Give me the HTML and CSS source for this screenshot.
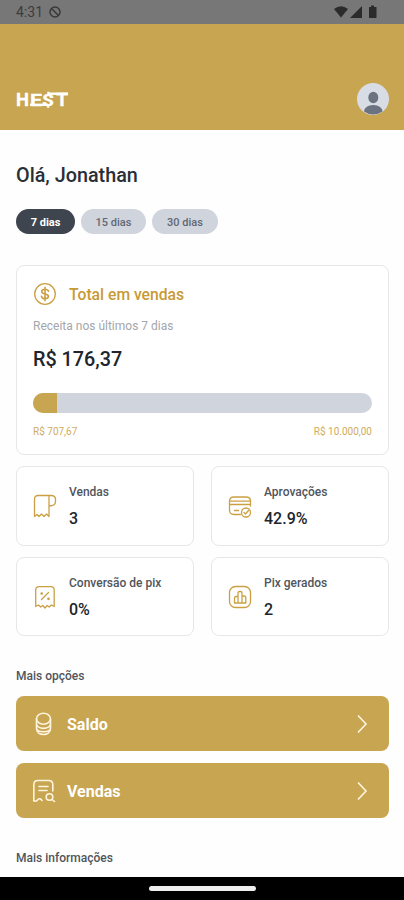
FILE: index.html
```html
<!DOCTYPE html>
<html lang="pt-BR">
<head>
<meta charset="utf-8">
<title>Hest</title>
<link rel="stylesheet" href="styles.css">
</head>
<body>
<div class="status">
  <span class="time">4:31</span>
  <svg class="dnd" width="12" height="12" viewBox="0 0 12 12" fill="none" stroke="#393939" stroke-width="1.5"><circle cx="6" cy="6" r="5"/><path d="M2.500 2.500l7 7"/></svg>
  <svg class="signals" width="44" height="14" viewBox="0 0 44 14" fill="#2b2b2b"><path d="M0 4Q7-1.500 14 4L7 12.500z"/><path d="M28 1v12H16z"/><path d="M35 2h2V.5h3V2h2.500v11H35z"/></svg>
</div>
<header class="header">
  <svg class="logo" width="54" height="20" viewBox="0 0 54 20"><g fill="none" stroke="#fff" stroke-width="2.400"><path d="M33 4.700h19"/><path d="M14 15.800h18"/></g><g class="logo-text"><text x="0" y="17" textLength="13" lengthAdjust="spacingAndGlyphs">H</text><text class="small" x="14" y="17" textLength="12" lengthAdjust="spacingAndGlyphs">E</text><text class="dollar" x="26" y="16.500" textLength="12" lengthAdjust="spacingAndGlyphs">$</text><text x="40" y="17" textLength="12" lengthAdjust="spacingAndGlyphs">T</text></g></svg>
  <svg class="avatar" width="32" height="32" viewBox="0 0 32 32"><circle cx="16" cy="16" r="16" fill="#d8dce4"/><ellipse cx="16.300" cy="14.500" rx="5" ry="5.700" fill="#6b7280"/><path d="M7 28.500Q8 22 16.300 22T25.500 28.500A16 16 0 0 1 7 28.500" fill="#6b7280"/></svg>
</header>
<main class="main">
  <h1 class="hello"><span>Olá, Jonathan</span></h1>
  <div class="chips"><button class="chip active">7 dias</button><button class="chip">15 dias</button><button class="chip">30 dias</button></div>
  <section class="card total">
    <div class="total-head">
      <svg width="24" height="24" viewBox="0 0 24 24" class="line"><circle cx="12" cy="12" r="10.300"/><path stroke-width="1.600" d="M15.500 9.200C15 7.600 13.700 7.200 12 7.200c-2 0-3.300.9-3.300 2.400 0 3.300 6.700 1.400 6.700 4.700 0 1.600-1.500 2.500-3.400 2.500s-3.200-.8-3.600-2.500M12 5.300v13.400"/></svg>
      <h2>Total em vendas</h2>
    </div>
    <p class="sub">Receita nos últimos 7 dias</p>
    <p class="amount">R$ 176,37</p>
    <div class="bar"><div class="fill"></div></div>
    <div class="range"><span>R$ 707,67</span><span>R$ 10.000,00</span></div>
  </section>
  <section class="stats">
    <div class="card stat">
      <svg width="24" height="24" viewBox="0 0 24 24" class="line"><path d="M16 16.500v6l-2.500-2.500-2.500 2.500L8.500 20 6 22.500 4 20.500l-2.500 2V5q0-3.500 3.500-3.500h13q4.500 0 4.500 4v2q0 4.500-6.500 4.500M16 16.500V1.500"/></svg>
      <div><p class="label">Vendas</p><p class="value">3</p></div>
    </div>
    <div class="card stat">
      <svg width="24" height="24" viewBox="0 0 24 24" class="line"><path d="M12.500 20.500H6Q1.500 20.500 1.500 16V7Q1.500 3 6 3h12q4.500 0 4.500 4v5M1.500 7.200h21M1.500 10.500h21M6.500 16.500h4"/><circle cx="18" cy="18.500" r="4.500"/><path d="M16 18.500l1.500 1.500 3-3.500"/></svg>
      <div><p class="label">Aprovações</p><p class="value">42.9%</p></div>
    </div>
    <div class="card stat">
      <svg width="24" height="24" viewBox="0 0 24 24" class="line"><path d="M2.700 21.500V5Q2.700 1.700 6.200 1.700h11.500q3.500 0 3.500 3.300v16.500L18.500 20l-2.300 2-2-1.500-2.200 2.500-2.300-2.500-2 1.500-2.200-2z"/><path d="M8.500 14.500l7-7"/><circle cx="8.700" cy="8.500" r=".7"/><circle cx="15.500" cy="13.800" r=".7"/></svg>
      <div><p class="label">Conversão de pix</p><p class="value">0%</p></div>
    </div>
    <div class="card stat">
      <svg width="24" height="24" viewBox="0 0 24 24" class="line"><rect x="1.500" y="1.500" width="21" height="21" rx="6"/><path d="M6.500 18v-5q0-1.500 1.500-1.500h2V8q0-1.500 1.500-1.500h1Q14 6.500 14 8v3h2q1.800 0 1.800 1.500V18zM10 11.500V18M14 11V18"/></svg>
      <div><p class="label">Pix gerados</p><p class="value">2</p></div>
    </div>
  </section>
  <h3 class="section">Mais opções</h3>
  <nav class="actions">
    <a class="action"><svg width="24" height="24" viewBox="0 0 24 24" class="line light"><ellipse cx="11.500" cy="6.800" rx="7" ry="5.500"/><path d="M4.500 7v9.500c0 8 14 8 14 0V7M4.500 11.500c0 6.500 14 6.500 14 0M4.500 16c0 5 14 5 14 0"/></svg><span>Saldo</span><svg class="chev" width="12" height="20" viewBox="0 0 12 20"><path d="M2 1.500l8 8.500-8 8.500"/></svg></a>
    <a class="action"><svg width="24" height="24" viewBox="0 0 24 24" class="line light"><path d="M10 21.500Q8 18.500 6 20.500L4.500 22H1.800V6q0-4.500 4-4.500h11q4 0 4 4.500v6M7 7.500h9M7 11.500h8"/><circle cx="17.500" cy="18" r="3.300"/><path d="M20 20.500l2.500 2"/></svg><span>Vendas</span><svg class="chev" width="12" height="20" viewBox="0 0 12 20"><path d="M2 1.500l8 8.500-8 8.500"/></svg></a>
  </nav>
  <h3 class="section info">Mais informações</h3>
</main>
<footer class="home"><div></div></footer>
</body>
</html>
```
FILE: styles.css
```css
* { box-sizing: border-box; margin: 0; padding: 0; }
body { width: 404px; height: 900px; overflow: hidden; display: flex; flex-direction: column; background: #fefefe; color: #20252d; font-family: Roboto, sans-serif; }
svg { display: block; flex: none; }
.status { height: 24px; background: #777; display: flex; align-items: center; padding: 0 26px 0 16px; flex: none; }
.time { font-size: 14px; color: #3c3c3c; width: 33px; }
.signals { margin-left: auto; }
.header { height: 106px; background: #c8a550; display: flex; align-items: flex-end; justify-content: space-between; padding: 0 15px 15px 16px; flex: none; }
.logo { margin-bottom: 6px; }
.logo-text { font: 700 18px Roboto, sans-serif; fill: #fff; stroke: #fff; stroke-width: .3px; }
.small { font-size: 16px; }
.dollar { font-size: 17px; }
.main { flex: 1; min-height: 0; padding: 33px 15px 0 16px; }
.hello { font-size: 19.800px; line-height: 26px; font-weight: 500; color: #2a2f37; }
.chips { display: flex; gap: 6px; margin-top: 20px; }
.chip { height: 25px; width: 65px; border: 0; border-radius: 13px; background: #d0d4dc; color: #626874; font: 500 11px Roboto, sans-serif; padding-top: 1px; }
.chip:last-child { width: 66px; }
.chip.active { width: 59px; background: #3e454e; color: #fff; font-weight: 700; }
.card { border: 1.500px solid #e5e7e9; border-radius: 8px; background: #fff; }
.total { margin-top: 31px; height: 190px; padding: 16px 16px 0; }
.total-head { display: flex; align-items: center; gap: 12px; height: 24px; }
.line { fill: none; stroke: #cba045; stroke-width: 1.300; stroke-linecap: round; stroke-linejoin: round; }
.total h2 { font-size: 15.700px; font-weight: 500; color: #c79a35; }
.sub { font-size: 12px; line-height: 16px; margin-top: 12px; color: #a4a6aa; }
.amount { font-size: 19.800px; line-height: 26px; font-weight: 500; margin-top: 13px; }
.bar { height: 20px; margin-top: 20px; border-radius: 10px; background: #d0d4dc; overflow: hidden; }
.fill { width: 24px; height: 100%; background: #c8a550; }
.range { display: flex; justify-content: space-between; margin-top: 12px; font-size: 10px; line-height: 14px; color: #d0ab60; }
.stats { display: grid; grid-template-columns: 178px 178px; justify-content: space-between; gap: 11px 0; margin-top: 11px; }
.stat { height: 79.500px; display: flex; align-items: center; gap: 12px; padding: 3px 0 0 16px; }
.stat svg { margin-top: -2px; }
.label { font-size: 12px; line-height: 16px; font-weight: 500; color: #50555c; }
.value { font-size: 16px; line-height: 22px; font-weight: 500; margin-top: 8px; }
.section { font-size: 12px; line-height: 16px; font-weight: 500; color: #50555c; margin-top: 32px; }
.actions { display: grid; gap: 12px; margin-top: 12px; }
.action { height: 55px; border-radius: 8px; background: #c8a550; display: flex; align-items: center; padding: 0 21px 0 16px; gap: 11px; color: #fff; font-size: 16px; font-weight: 700; }
.action span { padding-top: 1px; }
.light { stroke: #fff5df; stroke-width: 1.600; }
.chev { margin-left: auto; fill: none; stroke: #fff5df; stroke-width: 1.600; }
.home { height: 23px; background: #000; display: flex; justify-content: center; align-items: center; flex: none; }
.home div { width: 107px; height: 5px; border-radius: 3px; background: #eee; }
```
